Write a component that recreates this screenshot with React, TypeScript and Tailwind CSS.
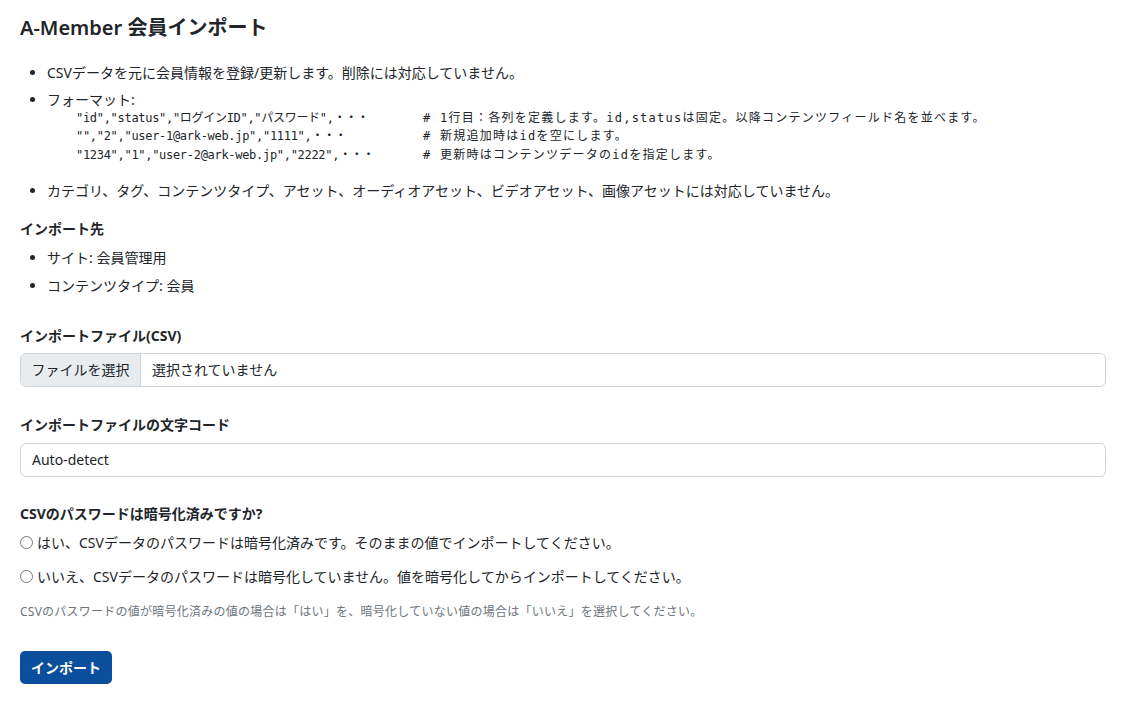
import React from "react";

const codeRows: [string, React.ReactNode][] = [
  [
    '"id","status","ログインID","パスワード",・・・',
    "# 1行目：各列を定義します。id,statusは固定。以降コンテンツフィールド名を並べます。",
  ],
  ['"","2","user-1@ark-web.jp","1111",・・・', "# 新規追加時はidを空にします。"],
  ['"1234","1","user-2@ark-web.jp","2222",・・・', "# 更新時はコンテンツデータのidを指定します。"],
];

function Radio({ label, className }: { label: string; className?: string }) {
  return (
    <label className={"flex items-center h-[20px] " + (className ?? "")}>
      <span className="w-[13px] h-[13px] rounded-full border border-[#767676] bg-white shrink-0" />
      <span className="ml-[4px]">{label}</span>
    </label>
  );
}

export default function App() {
  return (
    <div
      className="min-h-screen bg-white text-[#212529] text-[14px] pl-[20px] pr-[16px] pt-[16px] pb-[40px]"
      style={{ fontFamily: '"Noto Sans", "Noto Sans CJK JP", sans-serif' }}
    >
      <h1 className="text-[20px] leading-[24px] font-semibold">A-Member 会員インポート</h1>

      <ul className="list-disc pl-[27px] mt-[22.5px] flex flex-col gap-[7.5px] leading-[20px]">
        <li>CSVデータを元に会員情報を登録/更新します。削除には対応していません。</li>
        <li>
          フォーマット:
          <div
            className="mt-[-1.5px] mb-[9px] ml-[29px] text-[12px] leading-[18.5px] whitespace-pre"
            style={{ fontFamily: '"DejaVu Sans Mono", "Liberation Mono", "Noto Sans CJK JP", monospace' }}
          >
            {codeRows.map(([a, b], i) => (
              <div key={i} className="flex">
                <div className="w-[347px] shrink-0 tracking-[-0.3px]">{a}</div>
                <div className="tracking-[1.25px]">{b}</div>
              </div>
            ))}
          </div>
        </li>
        <li>カテゴリ、タグ、コンテンツタイプ、アセット、オーディオアセット、ビデオアセット、画像アセットには対応していません。</li>
      </ul>

      <div className="mt-[18px] font-bold leading-[20px]">インポート先</div>
      <ul className="list-disc pl-[27px] mt-[9px] flex flex-col gap-[8px] leading-[20px]">
        <li>サイト: 会員管理用</li>
        <li>コンテンツタイプ: 会員</li>
      </ul>

      <div className="mt-[30px] font-bold leading-[20px]">インポートファイル(CSV)</div>
      <div className="mt-[7px] h-[34px] flex border border-[#ced4da] rounded-[6px] overflow-hidden">
        <div className="w-[120px] bg-[#e9ecef] border-r border-[#ced4da] flex items-center justify-center">
          ファイルを選択
        </div>
        <div className="flex items-center pl-[11px]">選択されていません</div>
      </div>

      <div className="mt-[28px] font-bold leading-[20px]">インポートファイルの文字コード</div>
      <div className="mt-[8px] h-[34px] flex items-center border border-[#ced4da] rounded-[6px] pl-[11px]">
        Auto-detect
      </div>

      <div className="mt-[27px] font-bold leading-[20px]">CSVのパスワードは暗号化済みですか?</div>
      <Radio className="mt-[9px]" label="はい、CSVデータのパスワードは暗号化済みです。そのままの値でインポートしてください。" />
      <Radio className="mt-[14px]" label="いいえ、CSVデータのパスワードは暗号化していません。値を暗号化してからインポートしてください。" />
      <div className="mt-[16px] text-[12px] leading-[18px] text-[#6c757d] tracking-[0.25px]">
        CSVのパスワードの値が暗号化済みの値の場合は「はい」を、暗号化していない値の場合は「いいえ」を選択してください。
      </div>

      <button className="mt-[30px] h-[33px] w-[92px] rounded-[5px] bg-[#0b4f9c] text-white font-bold flex items-center justify-center">
        インポート
      </button>
    </div>
  );
}
